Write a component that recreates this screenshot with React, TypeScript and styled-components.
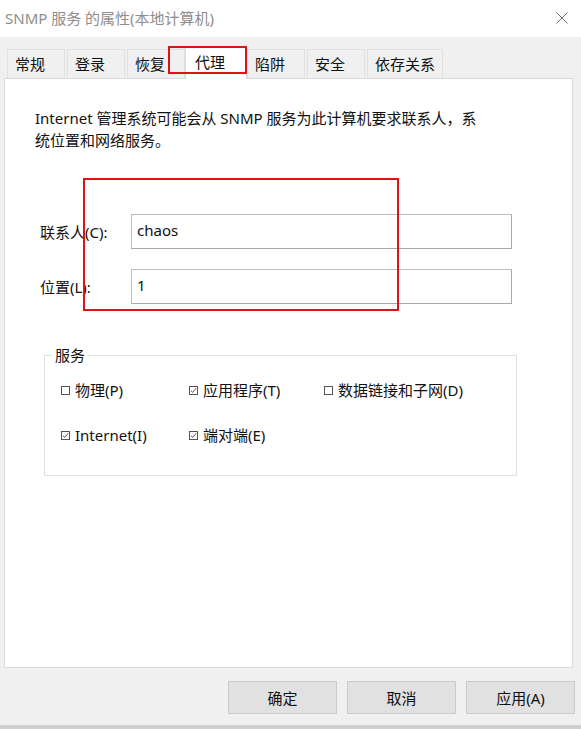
import React from "react";
import styled, { createGlobalStyle } from "styled-components";

const Global = createGlobalStyle`
  html, body { margin: 0; padding: 0; background: #f0f0f0; }
  * { box-sizing: border-box; }
`;

const FONT = `"Noto Sans", "Noto Sans CJK SC", sans-serif`;

const Window = styled.div`
  position: relative;
  width: 581px;
  height: 729px;
  display: flex;
  flex-direction: column;
  background: #f0f0f0;
  font-family: ${FONT};
  font-size: 15px;
  color: #111111;
  overflow: hidden;
`;

const TitleBar = styled.div`
  flex: none;
  height: 37px;
  background: #ffffff;
  display: flex;
  align-items: center;
  justify-content: space-between;
  padding: 0 13px 1px 5px;
`;

const Title = styled.span`
  color: #8e8e8e;
  font-size: 15px;
  line-height: 20px;
  white-space: nowrap;
`;

const CloseButton = styled.span`
  display: flex;
  width: 12px;
  height: 12px;
`;

const TabStrip = styled.div`
  flex: none;
  height: 41px;
  display: flex;
  align-items: flex-end;
  gap: 2px;
  padding-left: 7px;
`;

const Tab = styled.div<{ $active?: boolean }>`
  position: relative;
  display: flex;
  align-items: center;
  min-width: ${(p) => (p.$active ? 62 : 58)}px;
  height: ${(p) => (p.$active ? 33 : 29)}px;
  padding: ${(p) => (p.$active ? "0 9px 3px" : "0 7px 1px")};
  margin: ${(p) => (p.$active ? "0 -2px -1px" : "0")};
  background: ${(p) => (p.$active ? "#ffffff" : "#f0f0f0")};
  border: 1px solid ${(p) => (p.$active ? "#d9d9d9" : "#e0e0e0")};
  border-bottom: none;
  z-index: ${(p) => (p.$active ? 2 : 1)};
  line-height: 20px;
  white-space: nowrap;
  color: #111111;
`;

const Panel = styled.div`
  flex: none;
  height: 590px;
  margin: 0 8px 0 4px;
  background: #ffffff;
  border: 1px solid #dadada;
  padding-top: 28px;
  display: flex;
  flex-direction: column;
  align-items: flex-start;
`;

const Description = styled.p`
  margin: 0 0 0 30px;
  line-height: 22px;
  font-size: 15px;
`;

const FormGrid = styled.div`
  margin: 63px 0 0 35px;
  display: grid;
  grid-template-columns: 91px 381px;
  row-gap: 20px;
  align-items: center;
`;

const FieldLabel = styled.label`
  font-size: 15px;
  line-height: 20px;
  white-space: nowrap;
`;

const TextInput = styled.input`
  height: 35px;
  width: 381px;
  margin: 0;
  padding: 0 5px 4px;
  border: 1px solid #bdbdbd;
  border-right-color: #a8a8a8;
  border-bottom-color: #a8a8a8;
  background: #ffffff;
  font-family: ${FONT};
  font-size: 15px;
  color: #111111;
  outline: none;
`;

const Group = styled.fieldset`
  margin: 41px 0 0 39px;
  width: 473px;
  min-width: 0;
  border: 1px solid #dedede;
  padding: 14px 0 29px 16px;
`;

const Legend = styled.legend`
  margin-left: -9px;
  padding: 0 3px;
  font-size: 15px;
  line-height: 20px;
`;

const CheckGrid = styled.div`
  display: grid;
  grid-template-columns: 128px 135px auto;
  grid-auto-rows: 22px;
  row-gap: 23px;
`;

const CheckItem = styled.label`
  display: flex;
  align-items: center;
  gap: 5px;
  font-size: 15px;
  line-height: 20px;
  white-space: nowrap;
`;

const Box = styled.span`
  flex: none;
  display: flex;
  align-items: center;
  justify-content: center;
  width: 9px;
  height: 9px;
  margin-top: 1px;
  border: 1px solid #555555;
  background: #ffffff;
`;

const Footer = styled.div`
  flex: none;
  height: 57px;
  display: flex;
  justify-content: flex-end;
  align-items: flex-start;
  gap: 10px;
  padding: 13px 6px 0 0;
`;

const Button = styled.button`
  width: 109px;
  height: 33px;
  margin: 0;
  padding: 0;
  background: #e1e1e1;
  border: 1px solid #cbcbcb;
  font-family: ${FONT};
  font-size: 15px;
  color: #111111;
`;

const BottomEdge = styled.div`
  flex: none;
  height: 4px;
  background: #cfcfcf;
`;

const Annotation = styled.div<{ $x: number; $y: number; $w: number; $h: number }>`
  position: absolute;
  left: ${(p) => p.$x}px;
  top: ${(p) => p.$y}px;
  width: ${(p) => p.$w}px;
  height: ${(p) => p.$h}px;
  border: 2px solid #dc1414;
  pointer-events: none;
  z-index: 5;
`;

const Check = ({ checked, label }: { checked?: boolean; label: string }) => (
  <CheckItem>
    <Box>
      {checked && (
        <svg width="7" height="7" viewBox="0 0 7 7">
          <path d="M0.8 3.6 L2.7 5.4 L6.2 1.2" fill="none" stroke="#555" strokeWidth="1" />
        </svg>
      )}
    </Box>
    {label}
  </CheckItem>
);

const tabs = ["常规", "登录", "恢复", "代理", "陷阱", "安全", "依存关系"];

export default function App() {
  return (
    <Window>
      <Global />
      <TitleBar>
        <Title>SNMP 服务 的属性(本地计算机)</Title>
        <CloseButton>
          <svg width="12" height="12" viewBox="0 0 12 12">
            <path d="M0.5 0.5 L11.5 11.5 M11.5 0.5 L0.5 11.5" stroke="#707070" strokeWidth="1" />
          </svg>
        </CloseButton>
      </TitleBar>
      <TabStrip>
        {tabs.map((t) => (
          <Tab key={t} $active={t === "代理"}>
            {t}
          </Tab>
        ))}
      </TabStrip>
      <Panel>
        <Description>
          Internet 管理系统可能会从 SNMP 服务为此计算机要求联系人，系
          <br />
          统位置和网络服务。
        </Description>
        <FormGrid>
          <FieldLabel>联系人(C):</FieldLabel>
          <TextInput readOnly value="chaos" />
          <FieldLabel>位置(L):</FieldLabel>
          <TextInput readOnly value="1" />
        </FormGrid>
        <Group>
          <Legend>服务</Legend>
          <CheckGrid>
            <Check label="物理(P)" />
            <Check checked label="应用程序(T)" />
            <Check label="数据链接和子网(D)" />
            <Check checked label="Internet(I)" />
            <Check checked label="端对端(E)" />
          </CheckGrid>
        </Group>
      </Panel>
      <Footer>
        <Button>确定</Button>
        <Button>取消</Button>
        <Button>应用(A)</Button>
      </Footer>
      <BottomEdge />
      <Annotation $x={168} $y={46} $w={79} $h={28} />
      <Annotation $x={83} $y={178} $w={316} $h={133} />
    </Window>
  );
}
